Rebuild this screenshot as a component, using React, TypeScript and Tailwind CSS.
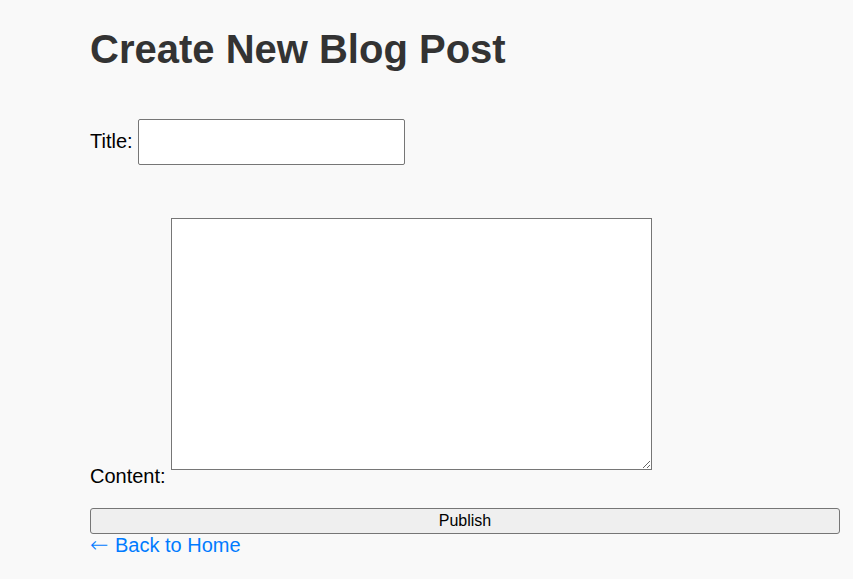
export default function App() {
  return (
    <div className="min-h-screen bg-[#f9f9f9] pl-[90px] pr-[13px] pt-[26px] font-['Liberation_Sans',Arial,sans-serif] text-black">
      <h1 className="text-[40px] leading-[46px] h-[46px] font-bold text-[#333]">Create New Blog Post</h1>

      <form onSubmit={(e) => e.preventDefault()}>
        {/* title */}
        <div className="mt-[47px] flex items-start">
          <label htmlFor="title" className="mt-[11px] text-[20px] leading-[23px]">
            Title:
          </label>
          <input
            id="title"
            type="text"
            className="ml-[5px] w-[267px] h-[46px] px-[10px] text-[20px] bg-white border border-[#767676] rounded-[2px] outline-none"
          />
        </div>

        {/* content */}
        <div className="mt-[53px] flex items-start">
          <label htmlFor="content" className="mt-[247px] text-[20px] leading-[23px]">
            Content:
          </label>
          <textarea
            id="content"
            className="ml-[5px] w-[481px] h-[252px] p-[2px] text-[16px] bg-white border border-[#767676] outline-none resize"
          />
        </div>

        <button
          type="submit"
          className="mt-[20px] block w-[750px] h-[26px] text-[16px] leading-[18px] bg-[#efefef] border border-[#767676] rounded-[3px]"
        >
          Publish
        </button>
      </form>

      <a href="#" className="-mt-[1px] flex items-baseline text-[20px] leading-[23px] text-[#007bff]">
        <span className="w-[25px] text-[22px] leading-[23px] font-['DejaVu_Sans',sans-serif] font-light">←</span>
        <span>Back to Home</span>
      </a>
    </div>
  );
}
